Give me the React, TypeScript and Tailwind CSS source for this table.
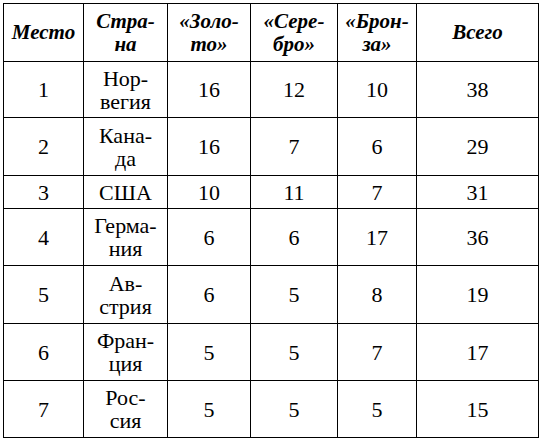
import { Fragment } from 'react';

const header: string[][] = [
  ['Место'],
  ['Стра-', 'на'],
  ['«Золо-', 'то»'],
  ['«Сере-', 'бро»'],
  ['«Брон-', 'за»'],
  ['Всего'],
];

const rows: { place: string; country: string[]; gold: number; silver: number; bronze: number; total: number }[] = [
  { place: '1', country: ['Нор-', 'вегия'], gold: 16, silver: 12, bronze: 10, total: 38 },
  { place: '2', country: ['Кана-', 'да'], gold: 16, silver: 7, bronze: 6, total: 29 },
  { place: '3', country: ['США'], gold: 10, silver: 11, bronze: 7, total: 31 },
  { place: '4', country: ['Герма-', 'ния'], gold: 6, silver: 6, bronze: 17, total: 36 },
  { place: '5', country: ['Ав-', 'стрия'], gold: 6, silver: 5, bronze: 8, total: 19 },
  { place: '6', country: ['Фран-', 'ция'], gold: 5, silver: 5, bronze: 7, total: 17 },
  { place: '7', country: ['Рос-', 'сия'], gold: 5, silver: 5, bronze: 5, total: 15 },
];

function Cell({ lines, head }: { lines: string[]; head?: boolean }) {
  return (
    <div
      className={
        'bg-white flex flex-col items-center justify-center text-center leading-[23px] ' +
        (head ? 'font-bold italic text-[21px]' : 'text-[22px]')
      }
    >
      {lines.map((l, i) => (
        <span key={i}>{l}</span>
      ))}
    </div>
  );
}

export default function App() {
  return (
    <div className="bg-white w-[543px] h-[442px] pt-[3px] pl-[3px] [font-family:'Liberation_Serif',serif] text-black">
      <div className="grid w-fit bg-black p-px gap-px grid-cols-[79px_83px_82px_86px_78px_121px] grid-rows-[57px_55px_57px_32px_56px_57px_56px_56px]">
        {header.map((h, i) => (
          <Cell key={i} lines={h} head />
        ))}
        {rows.map((r) => (
          <Fragment key={r.place}>
            <Cell lines={[r.place]} />
            <Cell lines={r.country} />
            <Cell lines={[String(r.gold)]} />
            <Cell lines={[String(r.silver)]} />
            <Cell lines={[String(r.bronze)]} />
            <Cell lines={[String(r.total)]} />
          </Fragment>
        ))}
      </div>
    </div>
  );
}
